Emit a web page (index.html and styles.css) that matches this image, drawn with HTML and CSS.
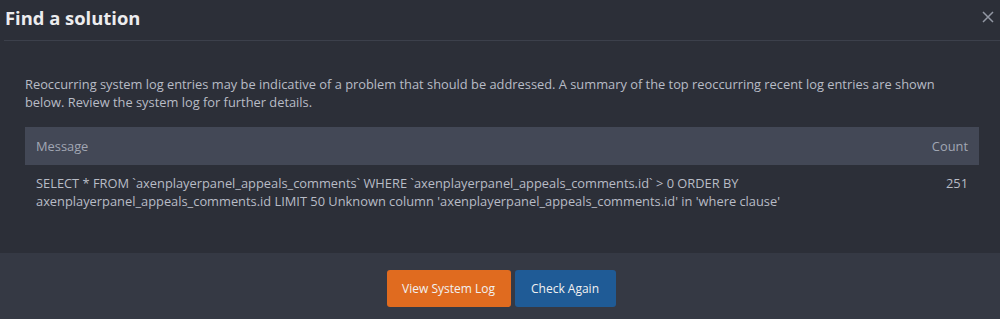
FILE: index.html
```html
<!DOCTYPE html>
<html lang="en">
<head>
    <meta charset="UTF-8">
    <title>Find a solution</title>
    <link rel="stylesheet" href="styles.css">
</head>
<body>
    <div class="modal">
        <div class="modal-header">
            <h3>Find a solution</h3>
            <button class="close-btn" aria-label="Close">
                <svg width="12" height="12" viewBox="0 0 12 12"><path d="M1 1L11 11M11 1L1 11" stroke="#9297a3" stroke-width="1.5" fill="none"/></svg>
            </button>
        </div>

        <div class="modal-body">
            <p>Reoccurring system log entries may be indicative of a problem that should be addressed. A summary of the top reoccurring recent log entries are shown below. Review the system log for further details.</p>

            <table class="log-table">
                <thead>
                    <tr>
                        <th>Message</th>
                        <th class="count">Count</th>
                    </tr>
                </thead>
                <tbody>
                    <tr>
                        <td>SELECT * FROM `axenplayerpanel_appeals_comments` WHERE `axenplayerpanel_appeals_comments.id` &gt; 0 ORDER BY axenplayerpanel_appeals_comments.id LIMIT 50 Unknown column 'axenplayerpanel_appeals_comments.id' in 'where clause'</td>
                        <td class="count">251</td>
                    </tr>
                </tbody>
            </table>
        </div>

        <div class="modal-footer">
            <button class="btn btn-orange">View System Log</button>
            <button class="btn btn-blue">Check Again</button>
        </div>
    </div>
</body>
</html>
```

FILE: styles.css
```css
* {
    margin: 0;
    padding: 0;
    box-sizing: border-box;
    font-family: "Open Sans", "Noto Sans", sans-serif;
}

body {
    background-color: #2c2f38;
    width: 1000px;
    height: 319px;
    overflow: hidden;
}

.modal {
    display: flex;
    flex-direction: column;
    height: 319px;
}

/* Cabeçalho */
.modal-header {
    margin: 0 0 0 4px;
    height: 41px;
    border-bottom: 1px solid #3c404b;
    display: flex;
    justify-content: space-between;
    align-items: center;
}

.modal-header h3 {
    color: #ececee;
    font-size: 18.4px;
    font-weight: 700;
    padding-left: 1px;
    margin-top: -6px;
}

.close-btn {
    background: none;
    border: none;
    width: 30px;
    height: 30px;
    display: flex;
    align-items: center;
    justify-content: center;
    margin-top: -6px;
    margin-right: -3px;
    cursor: pointer;
}

/* Corpo */
.modal-body {
    flex: 1;
    padding: 34px 21px 0 25px;
}

.modal-body p {
    color: #b8bcc6;
    font-size: 12.85px;
    line-height: 18px;
    max-width: 930px;
}

.log-table {
    width: 100%;
    margin-top: 16px;
    border-collapse: collapse;
    font-size: 12.85px;
}

.log-table th {
    background-color: #434856;
    color: #a1a6b3;
    font-weight: 400;
    text-align: left;
    height: 38px;
    padding: 0 11px;
}

.log-table td {
    color: #b8bcc6;
    line-height: 18px;
    padding: 9px 11px;
    vertical-align: top;
}

.log-table .count {
    text-align: right;
    width: 80px;
}

/* Rodapé */
.modal-footer {
    height: 66px;
    background-color: #353944;
    display: flex;
    justify-content: center;
    align-items: flex-start;
    gap: 4px;
    padding-top: 17px;
}

.btn {
    height: 37px;
    border: none;
    border-radius: 3px;
    color: #f1f1f1;
    font-size: 12px;
    padding: 0;
    white-space: nowrap;
    cursor: pointer;
}

.btn-orange {
    background-color: #e06b1f;
    width: 124px;
    margin-left: 2px;
}

.btn-blue {
    background-color: #1f5b96;
    width: 101px;
}
```
